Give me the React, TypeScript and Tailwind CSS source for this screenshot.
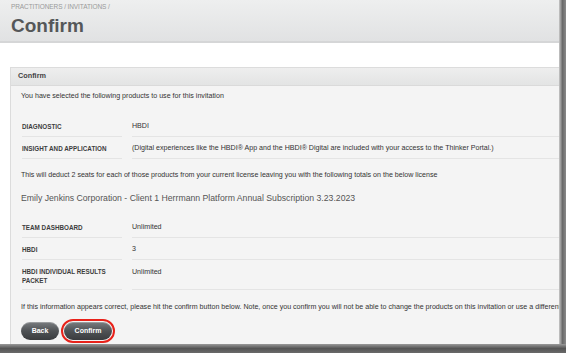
import React from "react";

const font = { fontFamily: '"Liberation Sans", Arial, sans-serif' };

type Row = { label: string[]; value: string };

const Table = ({ rows }: { rows: Row[] }) => (
  <div className="ml-[1px]">
    {rows.map((r, i) => (
      <div key={i} className="flex">
        <div
          className={`w-[100px] mr-[10px] border-b border-[#e4e4e4] flex flex-col justify-center pt-[2px] text-[6.3px] font-bold text-[#3d3d3d] leading-[9px] whitespace-nowrap ${r.label.length > 1 ? "h-[30px]" : "h-[22px]"}`}
        >
          {r.label.map((l) => (
            <span key={l}>{l}</span>
          ))}
        </div>
        <div
          className={`flex-1 border-b border-[#e4e4e4] flex pt-[2px] text-[7.1px] text-[#333] whitespace-nowrap ${r.label.length > 1 ? "h-[30px] items-start pt-[7px]" : "h-[22px] items-center"}`}
        >
          {r.value}
        </div>
      </div>
    ))}
  </div>
);

const Btn = ({ children }: { children: React.ReactNode }) => (
  <button className="h-[18px] rounded-full bg-gradient-to-b from-[#7a7d80] via-[#4f5255] to-[#3a3c3f] text-white font-bold text-[7px] shadow-[inset_0_1px_0_rgba(255,255,255,0.25)]">
    {children}
  </button>
);

export default function App() {
  return (
    <div className="w-[566px] h-[353px] overflow-hidden flex flex-col bg-white" style={font}>
      <div className="flex flex-1 min-h-0">
        <div className="flex-1 min-w-0 overflow-hidden">
          <div className="w-[620px]">
            {/* page header */}
            <div className="h-[43px] bg-gradient-to-b from-[#eeefef] to-[#e1e2e3] border-b-2 border-[#d5d6d7] pl-[11px]">
              <div className="pt-[4px] text-[6.5px] leading-[6px] text-[#9a9a9a] tracking-[-0.1px]">
                PRACTITIONERS / INVITATIONS /
              </div>
              <div className="mt-[5px] text-[19px] leading-[22px] font-bold text-[#555759]">Confirm</div>
            </div>

            <div className="h-[24px]" />

            {/* panel */}
            <div className="ml-[10px] border-l border-t border-[#dcdcdc] bg-[#f4f4f4] h-[300px]">
              <div className="h-[18px] bg-gradient-to-b from-[#eeeeee] to-[#e3e4e4] border-b border-[#dadada] pl-[7px] flex items-center text-[7.3px] font-bold text-[#444]">
                Confirm
              </div>
              <div className="pl-[10px]">
                <p className="pt-[5px] text-[7.1px] leading-[10px] text-[#333] whitespace-nowrap">
                  You have selected the following products to use for this invitation
                </p>
                <div className="mt-[14px]">
                  <Table
                    rows={[
                      { label: ["DIAGNOSTIC"], value: "HBDI" },
                      {
                        label: ["INSIGHT AND APPLICATION"],
                        value:
                          "(Digital experiences like the HBDI® App and the HBDI® Digital are included with your access to the Thinker Portal.)",
                      },
                    ]}
                  />
                </div>
                <p className="mt-[11px] text-[7.1px] leading-[10px] text-[#333] whitespace-nowrap">
                  This will deduct 2 seats for each of those products from your current license leaving you with the following totals on the below license
                </p>
                <p className="mt-[12px] text-[8.7px] leading-[12px] text-[#555] whitespace-nowrap">
                  Emily Jenkins Corporation - Client 1 Herrmann Platform Annual Subscription 3.23.2023
                </p>
                <div className="mt-[12px]">
                  <Table
                    rows={[
                      { label: ["TEAM DASHBOARD"], value: "Unlimited" },
                      { label: ["HBDI"], value: "3" },
                      { label: ["HBDI INDIVIDUAL RESULTS", "PACKET"], value: "Unlimited" },
                    ]}
                  />
                </div>
                <p className="mt-[12px] text-[7.1px] leading-[10px] text-[#333] whitespace-nowrap">
                  If this information appears correct, please hit the confirm button below. Note, once you confirm you will not be able to change the products on this invitation or use a different license.
                </p>
                <div className="mt-[10px] flex items-center gap-[5px]">
                  <div className="w-[38px] flex">
                    <div className="flex-1 flex flex-col">
                      <Btn>Back</Btn>
                    </div>
                  </div>
                  <div className="rounded-full border-2 border-[#e8221a] p-[1px] -my-[3px] -ml-[3px]">
                    <div className="w-[48px] flex flex-col">
                      <Btn>Confirm</Btn>
                    </div>
                  </div>
                </div>
              </div>
            </div>
          </div>
        </div>
        {/* right frame shadow */}
        <div className="w-[7px] bg-gradient-to-r from-[#c9c9c9] via-[#6a6a6a] to-[#8a8a8a]" />
      </div>
      {/* bottom frame shadow */}
      <div className="h-[9px] bg-gradient-to-b from-[#9a9a9a] via-[#555] to-[#6a6a6a]" />
    </div>
  );
}
